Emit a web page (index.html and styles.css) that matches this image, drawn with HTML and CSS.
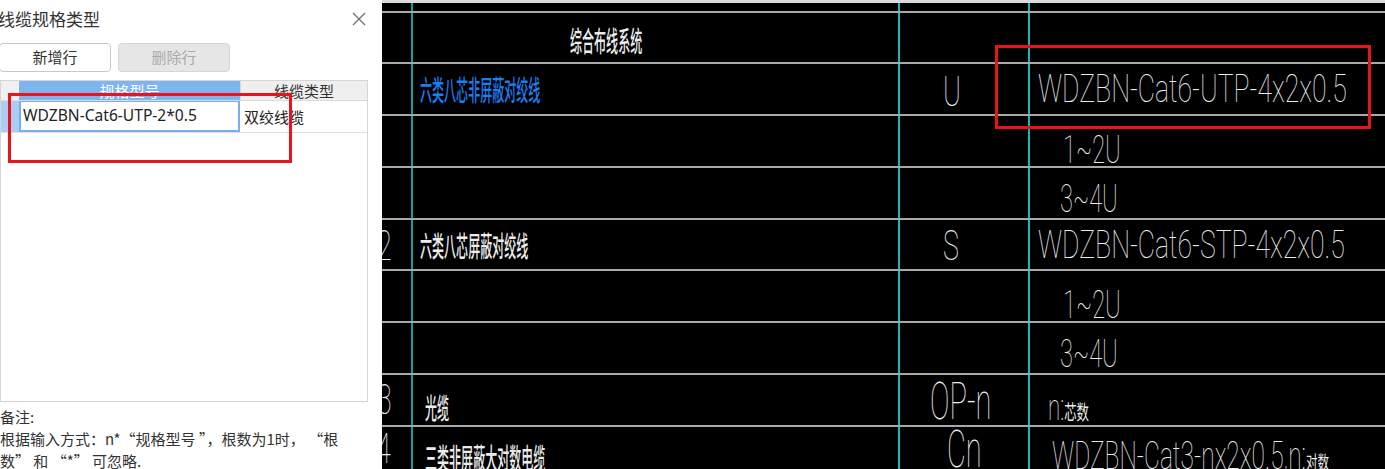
FILE: index.html
```html
<!DOCTYPE html>
<html lang="zh-CN">
<head>
<meta charset="utf-8">
<title>线缆规格类型</title>
<link rel="stylesheet" href="styles.css">
</head>
<body>
<div class="screen">
  <section class="dialog">
    <header class="dlg-head">
      <h1 class="dlg-title">线缆规格类型</h1>
      <button class="dlg-close" aria-label="关闭">
        <svg viewBox="0 0 14 14" width="14" height="14"><path d="M1 1L13 13M13 1L1 13" stroke="#707070" stroke-width="1.3" fill="none"/></svg>
      </button>
    </header>
    <div class="toolbar">
      <button class="btn">新增行</button>
      <button class="btn btn-disabled" disabled>删除行</button>
    </div>
    <div class="grid">
      <div class="grid-head">
        <div class="gh-idx"></div>
        <div class="gh-cell gh-sel">规格型号</div>
        <div class="gh-cell">线缆类型</div>
      </div>
      <div class="grid-row">
        <div class="gr-idx"><span class="gr-mark"></span></div>
        <div class="gr-cell gr-edit">WDZBN-Cat6-UTP-2*0.5</div>
        <div class="gr-cell">双绞线缆</div>
      </div>
    </div>
    <div class="notes">
      <p>备注:</p>
      <p>根据输入方式：n*“规格型号 ”，根数为1时， “根<br>数” 和 “*” 可忽略.</p>
    </div>
    <div class="mark mark-dlg"></div>
  </section>

  <section class="cad">
    <div class="cad-row cad-top">
      <div class="c num"></div><div class="c"></div><div class="c"></div><div class="c"></div>
    </div>
    <div class="cad-row r51">
      <div class="c num"></div>
      <div class="c"><span class="zh title">综合布线系统</span></div>
      <div class="c"></div>
      <div class="c"></div>
    </div>
    <div class="cad-row">
      <div class="c num"><span class="lat no no-1">1</span></div>
      <div class="c"><span class="zh blue d1">六类八芯非屏蔽对绞线</span></div>
      <div class="c"><span class="lat sym sym-u">U</span></div>
      <div class="c"><span class="lat spec">WDZBN-Cat6-UTP-4x2x0.5</span></div>
    </div>
    <div class="cad-row">
      <div class="c num"></div><div class="c"></div><div class="c"></div>
      <div class="c"><span class="lat sub sub-a">1~2U</span></div>
    </div>
    <div class="cad-row">
      <div class="c num"></div><div class="c"></div><div class="c"></div>
      <div class="c"><span class="lat sub sub-b">3~4U</span></div>
    </div>
    <div class="cad-row r51">
      <div class="c num"><span class="lat no no-2">2</span></div>
      <div class="c"><span class="zh d1">六类八芯屏蔽对绞线</span></div>
      <div class="c"><span class="lat sym sym-s">S</span></div>
      <div class="c"><span class="lat spec">WDZBN-Cat6-STP-4x2x0.5</span></div>
    </div>
    <div class="cad-row">
      <div class="c num"></div><div class="c"></div><div class="c"></div>
      <div class="c"><span class="lat sub sub-c">1~2U</span></div>
    </div>
    <div class="cad-row">
      <div class="c num"></div><div class="c"></div><div class="c"></div>
      <div class="c"><span class="lat sub sub-b">3~4U</span></div>
    </div>
    <div class="cad-row">
      <div class="c num"><span class="lat no no-3">3</span></div>
      <div class="c"><span class="zh d2">光缆</span></div>
      <div class="c"><span class="lat big big-op">OP-n</span></div>
      <div class="c"><span class="lat note">n:<span class="zh-s">芯数</span></span></div>
    </div>
    <div class="cad-row last">
      <div class="c num"><span class="lat no no-4">4</span></div>
      <div class="c"><span class="zh d3">三类非屏蔽大对数电缆</span></div>
      <div class="c"><span class="lat big big-cn">Cn</span></div>
      <div class="c"><span class="lat spec spec-3">WDZBN-Cat3-nx2x0.5,n:<span class="zh-s">对数</span></span></div>
    </div>
    <div class="mark mark-cad"></div>
  </section>
</div>
</body>
</html>
```

FILE: styles.css
```css
* { box-sizing: border-box; margin: 0; padding: 0; }
html, body { width: 1385px; height: 469px; overflow: hidden; background: #000; }
body { font-family: "Noto Sans", "Noto Sans CJK SC", sans-serif; }

.screen { display: flex; height: 469px; }

/* ---------- dialog ---------- */
.dialog {
  position: relative;
  width: 382px;
  flex: none;
  background: #fff;
  color: #333;
  font-family: "Noto Sans", "Noto Sans CJK SC", sans-serif;
  z-index: 1;
}
.dlg-head { height: 43px; display: flex; justify-content: space-between; align-items: flex-start; }
.dlg-title {
  margin-left: -2px;
  padding-top: 10px;
  font: 400 17px/17px "Noto Sans CJK SC", sans-serif;
  color: #333;
}
.dlg-close {
  margin: 12px 16px 0 0;
  width: 14px; height: 14px;
  border: 0; background: none;
  display: flex;
}
.toolbar { display: flex; gap: 7px; height: 29px; }
.btn {
  width: 112px; height: 29px;
  border: 1px solid #c8c8c8;
  border-radius: 4px;
  background: #fff;
  font: 400 15px/1 "Noto Sans CJK SC", sans-serif;
  color: #333;
  padding-bottom: 2px;
}
.btn:first-child { margin-left: -1px; }
.btn-disabled { background: #e6e6e6; border-color: #d6d6d6; color: #aaa; }

.grid {
  margin-top: 8px;
  width: 368px; height: 322px;
  border: 1px solid #d6d6d6;
  background: #fff;
}
.grid-head, .grid-row { display: grid; grid-template-columns: 18px 221px 1fr; }
.grid-head { height: 20px; border-bottom: 1px solid #dcdcdc; }
.gh-idx { background: #f0f0f0; }
.gh-cell {
  display: flex; align-items: center; justify-content: center;
  font: 400 15px/1 "Noto Sans CJK SC", sans-serif;
  background: #efefef; color: #333;
  border-left: 1px solid #d8d8d8;
}
.gh-sel { background: #7fb5ef; color: #fff; border-left: 0; }
.grid-row { height: 32px; border-bottom: 1px solid #e0e0e0; }
.gr-idx { background: #a9cdf4; display: flex; align-items: center; justify-content: center; }
.gr-mark { width: 1px; height: 5px; background: #fff; }
.gr-cell {
  display: flex; align-items: center;
  font: 400 15px/1 "Noto Sans CJK SC", sans-serif;
  color: #222;
  padding-left: 4px;
}
.gr-edit {
  border: 2px solid #78aeea;
  border-top-width: 1px;
  font: 400 15.6px/1 "Noto Sans", "Noto Sans CJK SC", sans-serif;
  padding-left: 2px;
  color: #222;
}
.notes { margin-top: 4px; font: 400 15px/22px "Noto Sans CJK SC", sans-serif; color: #333; }

.mark { position: absolute; border: 3px solid #e8141c; pointer-events: none; }
.mark-dlg { left: 8px; top: 93px; width: 284px; height: 70px; }

/* ---------- CAD drawing ---------- */
.cad {
  position: relative;
  flex: 1;
  background: #000;
  overflow: hidden;
  display: flex;
  flex-direction: column;
}
.cad-row {
  display: grid;
  grid-template-columns: 29px 487px 130px 1fr;
  height: 52px;
  flex: none;
  border-top: 2px solid #a8a8a8;
}
.cad-row.r51 { height: 51px; }
.cad-top { height: 11px; border-top: 3px solid #dcdcdc; border-bottom: 0; }
.cad-row.last { flex: 1; }
.cad-row.last .c { align-items: flex-start; }

.c {
  display: flex;
  align-items: center;
  border-left: 2px solid #19b8b8;
  white-space: nowrap;
  min-width: 0;
}
.c.num { border-left: 0; overflow: hidden; }
.cad-row > .c:nth-child(2) { border-left-color: #139e9e; }

.lat {
  display: inline-block;
  font-family: Roboto, "Noto Sans CJK SC", sans-serif;
  font-weight: 100;
  color: #ececec;
  transform-origin: left center;
  white-space: nowrap;
}
.zh {
  display: inline-block;
  font: 500 28px/28px "Noto Sans CJK SC", sans-serif;
  color: #ececec;
  transform: scaleX(0.43);
  transform-origin: left center;
}
.zh.blue { color: #1b7ff2; }
.title { margin-left: 157px; margin-top: 4px; }
.d1 { margin-left: 7px; }
.d2 { margin-left: 12px; margin-top: 14px; }
.d3 { margin-left: 12px; margin-top: 16px; }

.spec { font-size: 38px; line-height: 38px; transform: scaleX(0.70); margin-left: 8px; }
.spec-3 { margin-left: 22px; margin-top: 10px; transform: scaleX(0.645); }
.sym { font-size: 42px; line-height: 42px; transform: scaleX(0.64); margin-left: 43px; }
.sym-u { margin-top: 5px; }
.sym-s { margin-top: 3px; }
.sub { font-size: 38px; line-height: 32px; transform: scaleX(0.62); }
.sub-a { margin-left: 33px; margin-top: 17px; }
.sub-b { margin-left: 30px; margin-top: 11px; }
.sub-c { margin-left: 33px; margin-top: 17px; }
.big { font-size: 52px; line-height: 36px; transform: scaleX(0.56); }
.big-op { margin-left: 30px; margin-top: 3px; }
.big-cn { margin-left: 47px; margin-top: 5px; }
.note { font-size: 36px; line-height: 30px; transform: scaleX(0.62); margin-left: 18px; margin-top: 15px; }
.zh-s { font: 400 20px/1 "Noto Sans CJK SC", sans-serif; display: inline-block; }
.spec-3 .zh-s { font-size: 18px; }
.no { font-size: 42px; line-height: 36px; transform: scaleX(0.64); }
.no-1 { margin-left: -14px; margin-top: 4px; }
.no-2 { margin-left: -5px; margin-top: 3px; }
.no-3 { margin-left: -5px; margin-top: 0; }
.no-4 { margin-left: -6px; margin-top: 4px; }

.mark-cad { left: 613px; top: 45px; width: 376px; height: 84px; }
```
